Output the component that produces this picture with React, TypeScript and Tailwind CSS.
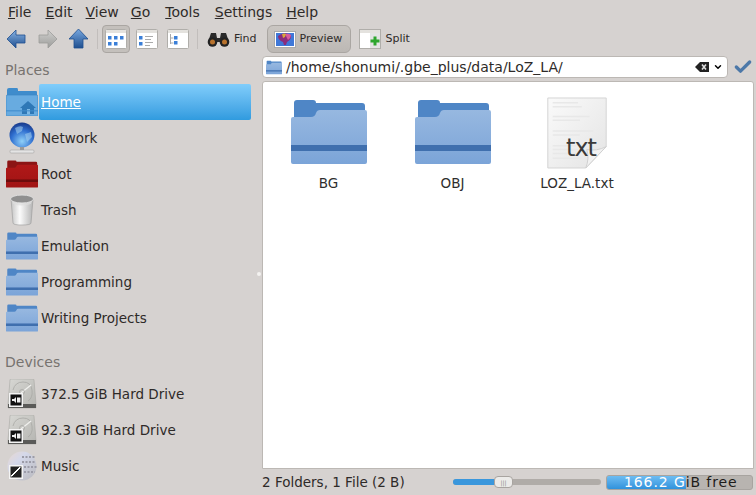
import React from "react";
import { Check, ChevronDown } from "lucide-react";

const FolderIcon = ({ id, className, back = "#4f86c6", top = "#97b8e0", bottom = "#7ba4d8", band = "#3f6fae" }: { id: string; className: string; back?: string; top?: string; bottom?: string; band?: string }) => (
  <svg viewBox="0 0 76 64" className={className}>
    <defs>
      <linearGradient id={id} x1="0" y1="0" x2="0" y2="1">
        <stop offset="0" stopColor={top} />
        <stop offset="1" stopColor={bottom} />
      </linearGradient>
    </defs>
    <path d="M3 3q0-3 3-3h16q3 0 3 3h46q3 0 3 3v14H3z" fill={back} />
    <path d="M0 19q0-2 2-2h18q4 0 5-4 1-3 4-3h45q2 0 2 2v50q0 2-2 2H2q-2 0-2-2z" fill={`url(#${id})`} />
    <rect x="0" y="45" width="76" height="6" fill={band} />
  </svg>
);

const HomeFolderIcon = () => (
  <svg viewBox="0 0 32 28" className="h-7 w-8">
    <path d="M1 2q0-2 2-2h8q1 0 1 2v1h18q1 0 1 1v5H1z" fill="#3f8ccc" />
    <rect x="0" y="7" width="32" height="21" rx="1.5" fill="#68abe0" stroke="#3c86c4" strokeWidth="0.7" />
    <path d="M14 20l8-7 8 7h-2v6H16v-6z" fill="#2f78b6" />
    <rect x="21" y="21" width="3" height="5" fill="#7db9e6" />
    <rect x="0" y="22" width="32" height="1.5" fill="#3f8ccc" opacity="0.7" />
  </svg>
);

const GlobeIcon = () => (
  <svg viewBox="0 0 26 33" className="h-[33px] w-[26px]">
    <defs>
      <radialGradient id="globe" cx="0.5" cy="0.75" r="0.8">
        <stop offset="0" stopColor="#8fd0f8" />
        <stop offset="0.55" stopColor="#2f6fd0" />
        <stop offset="1" stopColor="#14307e" />
      </radialGradient>
    </defs>
    <circle cx="13" cy="13" r="12.5" fill="url(#globe)" />
    <path d="M6 6q5-3 8-1l-1 4-5 3zM16 12l6-2 1 5-5 5z" fill="#a9d4ee" opacity="0.55" />
    <rect x="11" y="25" width="4" height="4" fill="#9a9a9a" />
    <rect x="1" y="28" width="24" height="3" rx="1" fill="#e4e4e4" stroke="#999" strokeWidth="0.5" />
  </svg>
);

const TrashIcon = () => (
  <svg viewBox="0 0 26 32" className="h-8 w-[26px]">
    <defs>
      <linearGradient id="bin" x1="0" y1="0" x2="1" y2="0">
        <stop offset="0" stopColor="#c4c4c4" />
        <stop offset="0.4" stopColor="#fbfbfb" />
        <stop offset="1" stopColor="#b4b4b4" />
      </linearGradient>
    </defs>
    <path d="M2 5l2 24q0 2 9 2t9-2l2-24z" fill="url(#bin)" stroke="#999" strokeWidth="0.6" />
    <ellipse cx="13" cy="5" rx="11.5" ry="4" fill="#8f8f8f" stroke="#ddd" strokeWidth="1" />
    <path d="M3 7q10 5 20 0l-1 3q-9 3-18 0z" fill="#ddd" opacity="0.7" />
  </svg>
);

const DriveIcon = ({ id }: { id: string }) => (
  <svg viewBox="0 0 30 30" className="h-[30px] w-[30px]">
    <defs>
      <linearGradient id={id} x1="0" y1="0" x2="1" y2="1">
        <stop offset="0" stopColor="#d8d8d4" />
        <stop offset="1" stopColor="#b4b4b0" />
      </linearGradient>
    </defs>
    <path d="M3 1q0-1 1-1h22q1 0 1 1l2 24v4H1v-4z" fill={`url(#${id})`} stroke="#a0a09c" strokeWidth="0.5" />
    <path d="M1 25h28v4H1z" fill="#5a5a58" />
    <path d="M6 11q2-8 10-8t9 8-4 11" fill="none" stroke="#a8a8a4" strokeWidth="0.8" />
    <path d="M24 6L14 14" stroke="#f0f0ee" strokeWidth="1.200" />
    <circle cx="15" cy="13" r="2.500" fill="none" stroke="#a4a4a0" strokeWidth="0.7" />
    <rect x="2" y="14" width="14" height="14" fill="#f4f4f4" />
    <rect x="3.500" y="15.500" width="11" height="11" fill="#111" />
    <path d="M5 20h2l2-2v6l-2-2H5z" fill="#eee" />
    <rect x="10" y="18.500" width="3.500" height="5" fill="#eee" />
  </svg>
);

const DiscIcon = () => (
  <svg viewBox="0 0 30 30" className="h-[30px] w-[30px]">
    <defs>
      <linearGradient id="disc" x1="0" y1="0" x2="1" y2="1">
        <stop offset="0" stopColor="#e8d8d0" />
        <stop offset="0.35" stopColor="#d4d8ea" />
        <stop offset="1" stopColor="#b8b8bc" />
      </linearGradient>
    </defs>
    <circle cx="15" cy="15" r="14.500" fill="url(#disc)" />
    <path d="M15 6h13M15 11h14M17 16h13M17 21h11" stroke="#9c9ca8" strokeWidth="2" strokeDasharray="2 1.500" />
    <rect x="2" y="14" width="14" height="14" fill="#f4f4f4" />
    <rect x="3.500" y="15.500" width="11" height="11" fill="#222" />
    <path d="M5 25l8-8v-1l-9 9z" fill="#fff" stroke="#fff" />
  </svg>
);

const ViewIcon = ({ mode }: { mode: "icons" | "details" | "columns" }) => (
  <svg viewBox="0 0 22 20" className="h-5 w-[22px]">
    <rect x="0.500" y="0.500" width="21" height="19" rx="1" fill="#fff" stroke="#b0aeaa" />
    <rect x="1" y="1" width="20" height="3" fill="#e4e2de" />
    {mode === "icons" && (
      <g fill="#3a7fd8">
        <rect x="3" y="7" width="3.500" height="3.500" />
        <rect x="9" y="7" width="3.500" height="3.500" />
        <rect x="15" y="7" width="3.500" height="3.500" />
        <rect x="3" y="13" width="3.500" height="3.500" />
        <rect x="9" y="13" width="3.500" height="3.500" />
      </g>
    )}
    {mode === "details" && (
      <g>
        <rect x="3" y="7" width="3.500" height="3.500" fill="#3a7fd8" />
        <rect x="3" y="13" width="3.500" height="3.500" fill="#3a7fd8" />
        <path d="M9 7.500h8M9 10.500h6M9 13.500h8M9 16.500h5" stroke="#aaa" />
      </g>
    )}
    {mode === "columns" && (
      <g>
        <path d="M3.500 5v10M3.500 9h3M3.500 14h3" stroke="#aaa" fill="none" />
        <rect x="7" y="7" width="3.500" height="3.500" fill="#3a7fd8" />
        <rect x="7" y="12" width="3.500" height="3.500" fill="#3a7fd8" />
      </g>
    )}
  </svg>
);

const Arrow = ({ dir, id, light, dark }: { dir: "left" | "right" | "up"; id: string; light: string; dark: string }) => {
  const d = {
    left: "M0 10L9 1v5h9v8H9v5z",
    right: "M19 10L10 1v5H1v8h9v5z",
    up: "M9.500 0L19 10h-5v9H5v-9H0z",
  }[dir];
  return (
    <svg viewBox="0 0 19 20" className="h-5 w-[19px]">
      <defs>
        <linearGradient id={id} x1="0" y1="0" x2="0" y2="1">
          <stop offset="0" stopColor={light} />
          <stop offset="1" stopColor={dark} />
        </linearGradient>
      </defs>
      <path d={d} fill={`url(#${id})`} stroke={dark} strokeWidth="0.8" />
    </svg>
  );
};

const Binoculars = () => (
  <svg viewBox="0 0 23 15" className="h-[15px] w-[23px]">
    <path d="M4 1h5l1 5h3l1-5h5l3 9H1z" fill="#2a2a2a" />
    <circle cx="5.500" cy="10" r="4.800" fill="#222" />
    <circle cx="17.500" cy="10" r="4.800" fill="#222" />
    <circle cx="5.500" cy="10" r="2.500" fill="#b8722c" />
    <circle cx="17.500" cy="10" r="2.500" fill="#b8722c" />
  </svg>
);

const PreviewIcon = () => (
  <svg viewBox="0 0 22 17" className="h-[17px] w-[22px]">
    <rect x="0.500" y="0.500" width="21" height="16" fill="#fff" stroke="#aaa" />
    <rect x="2" y="2" width="18" height="13" fill="#3f78d8" />
    <path d="M4 5q6-5 13-1 1 4-4 7l-1 3h-2l-1-3Q4 9 4 5z" fill="#8a2c7c" />
    <path d="M11 3q4-1 6 1 0 3-3 5z" fill="#d85c9c" />
    <path d="M8 3q3-1 4 0l-1 3-2 1z" fill="#d8a83c" />
  </svg>
);

const SplitIcon = () => (
  <svg viewBox="0 0 22 20" className="h-5 w-[22px]">
    <rect x="0.500" y="0.500" width="21" height="19" fill="#fff" stroke="#b0aeaa" />
    <rect x="1" y="1" width="20" height="3" fill="#e4e2de" />
    <rect x="11" y="4" width="10" height="15" fill="#e4e4e4" />
    <path d="M14.500 7.500h3v3h3v3h-3v3h-3v-3h-3v-3h3z" fill="#2ea62e" />
  </svg>
);

const TxtIcon = () => (
  <div className="relative h-[72px] w-[62px]">
    <svg viewBox="0 0 62 74" className="h-[72px] w-[62px]">
      <defs>
        <linearGradient id="page" x1="0" y1="0" x2="1" y2="1">
          <stop offset="0" stopColor="#fafafa" />
          <stop offset="1" stopColor="#e4e4e4" />
        </linearGradient>
      </defs>
      <path d="M1 1h60v50L40 73H1z" fill="url(#page)" stroke="#d4d4d4" />
      <path d="M6 6h26M6 10h30M6 20h38M6 24h28M6 35h42M6 39h28M6 50h24M6 54h26M6 58h24M6 63h30" stroke="#e8e8e8" strokeWidth="1.500" />
      <path d="M61 51L40 73q4-10 1-19 10 2 20-3z" fill="#f2f2f2" stroke="#d0d0d0" />
    </svg>
    <span className="absolute left-[20px] top-[39px] text-[24px] leading-none text-[#3a3a3a] tracking-[-1px]">txt</span>
  </div>
);

const PlaceRow = ({ icon, label, active }: { icon: React.ReactNode; label: string; active?: boolean }) => (
  <div className="flex h-9 items-center">
    <div className="flex w-[39px] shrink-0 justify-center pl-[4px]">{icon}</div>
    {active ? (
      <div className="flex h-[36px] w-[212px] items-center rounded-[2px] bg-gradient-to-b from-[#80cdfb] to-[#2f9bdf] pl-[2px] text-white underline">
        {label}
      </div>
    ) : (
      <span className="pl-[2px]">{label}</span>
    )}
  </div>
);

const FileItem = ({ icon, name, width }: { icon: React.ReactNode; name: string; width: string }) => (
  <div className={`flex flex-col items-center ${width}`}>
    <div className="h-[72px]">{icon}</div>
    <span className="mt-[4px] text-[13.500px] leading-[20px] text-[#2e2e2e]">{name}</span>
  </div>
);

const MenuItem = ({ first, rest, className }: { first: string; rest: string; className?: string }) => (
  <span className={className}>
    <span className="underline">{first}</span>
    {rest}
  </span>
);

export default function App() {
  return (
    <div
      className="flex h-[495px] w-[756px] flex-col overflow-hidden bg-[#d6d2d0] text-[14px] text-[#2e2a28]"
      style={{ fontFamily: '"DejaVu Sans", sans-serif' }}
    >
      <div className="flex h-[24px] items-center gap-[14px] pl-[8px] text-[14px]">
        <MenuItem first="F" rest="ile" />
        <MenuItem first="E" rest="dit" />
        <MenuItem first="V" rest="iew" className="ml-[-1px]" />
        <MenuItem first="G" rest="o" className="ml-[-2px]" />
        <MenuItem first="T" rest="ools" className="ml-[1px]" />
        <MenuItem first="S" rest="ettings" className="ml-[1px]" />
        <MenuItem first="H" rest="elp" />
      </div>

      <div className="flex h-[30px] items-center pl-[7px] text-[11px]">
        <Arrow dir="left" id="a1" light="#8ab4e4" dark="#1f4f8f" />
        <div className="ml-[12px]"><Arrow dir="right" id="a2" light="#d0d0ce" dark="#9c9c9a" /></div>
        <div className="ml-[12px]"><Arrow dir="up" id="a3" light="#78a8e0" dark="#1f4f8f" /></div>
        <div className="ml-[9px] h-[20px] w-px bg-[#c2bebc]" />
        <div className="ml-[4px] flex h-[28px] w-[28px] items-center justify-center rounded-[4px] border border-[#aaa6a2] bg-[#c4c0bc]">
          <ViewIcon mode="icons" />
        </div>
        <div className="ml-[6px]"><ViewIcon mode="details" /></div>
        <div className="ml-[9px]"><ViewIcon mode="columns" /></div>
        <div className="ml-[8px] h-[20px] w-px bg-[#c2bebc]" />
        <div className="ml-[9px]"><Binoculars /></div>
        <span className="ml-[4px]">Find</span>
        <div className="ml-[10px] flex h-[28px] w-[84px] items-center rounded-[6px] border border-[#aaa6a2] bg-gradient-to-b from-[#cac6c2] to-[#bcb8b4] pl-[6px]">
          <PreviewIcon />
          <span className="ml-[4px]">Preview</span>
        </div>
        <div className="ml-[8px]"><SplitIcon /></div>
        <span className="ml-[5px]">Split</span>
      </div>

      <div className="flex min-h-0 flex-1">
        <aside className="relative w-[262px] shrink-0 text-[13.500px]">
          <div className="flex h-[30px] items-center pl-[5px] pt-[2px] text-[14px] text-[#77736f]">Places</div>
          <PlaceRow icon={<HomeFolderIcon />} label="Home" active />
          <PlaceRow icon={<GlobeIcon />} label="Network" />
          <PlaceRow icon={<FolderIcon id="f1" className="h-[28px] w-[32px]" back="#8c1414" top="#b01818" bottom="#a01414" band="#6c0c0c" />} label="Root" />
          <PlaceRow icon={<TrashIcon />} label="Trash" />
          <PlaceRow icon={<FolderIcon id="f2" className="h-[28px] w-[32px]" />} label="Emulation" />
          <PlaceRow icon={<FolderIcon id="f3" className="h-[28px] w-[32px]" />} label="Programming" />
          <PlaceRow icon={<FolderIcon id="f4" className="h-[28px] w-[32px]" />} label="Writing Projects" />
          <div className="flex h-[37px] items-center pl-[5px] pt-[15px] text-[14px] text-[#77736f]">Devices</div>
          <div className="h-[3px]" />
          <PlaceRow icon={<DriveIcon id="d1" />} label="372.5 GiB Hard Drive" />
          <PlaceRow icon={<DriveIcon id="d2" />} label="92.3 GiB Hard Drive" />
          <PlaceRow icon={<DiscIcon />} label="Music" />
          <div className="absolute left-[257px] top-[218px] h-[4px] w-[4px] rounded-full bg-[#f4f2f0]" />
        </aside>

        <main className="flex min-w-0 flex-1 flex-col">
          <div className="flex h-[26px] items-start pt-[2px]">
            <div className="flex h-[22px] w-[466px] items-center rounded-[4px] border border-[#bcb8b4] bg-white pl-[3px] pr-[4px] text-[#2e2a28]">
              <FolderIcon id="f5" className="h-[15px] w-[16px]" />
              <span className="ml-[4px] flex-1 whitespace-nowrap">/home/shonumi/.gbe_plus/data/LoZ_LA/</span>
              <svg viewBox="0 0 14 10" className="h-[10px] w-[14px]">
                <path d="M0 5l5-5h9v10H5z" fill="#222" />
                <path d="M7 2.500l4 5M11 2.500l-4 5" stroke="#ddd" strokeWidth="1.600" />
              </svg>
              <ChevronDown className="ml-[4px] h-[10px] w-[10px] text-black" strokeWidth={3.5} />
            </div>
            <Check className="ml-[5px] mt-[1px] h-[20px] w-[20px] text-[#4c78a8]" strokeWidth={4} />
          </div>
          <div className="ml-0 mr-[2px] mt-[1px] flex h-[388px] gap-[1px] rounded-t-[3px] border border-[#bcb8b4] bg-white pl-[1px] pt-[15px]">
            <FileItem icon={<FolderIcon id="f6" className="mt-[3px] h-[64px] w-[76px]" />} name="BG" width="w-[129px]" />
            <FileItem icon={<FolderIcon id="f7" className="mt-[3px] h-[64px] w-[76px]" />} name="OBJ" width="w-[117px]" />
            <FileItem icon={<TxtIcon />} name="LOZ_LA.txt" width="w-[130px]" />
          </div>
          <div className="flex flex-1 items-center text-[13.500px]">
            <span className="w-[191px] whitespace-nowrap">2 Folders, 1 File (2 B)</span>
            <div className="relative h-[6px] w-[148px] rounded-full bg-[#b0aca8]">
              <div className="h-[6px] w-[44px] rounded-l-full bg-[#3a97dc]" />
              <div className="absolute left-[41px] top-[-3px] flex h-[12px] w-[19px] items-center justify-center rounded-[4px] border border-[#a8a4a0] bg-[#ecebe9] text-[6px] text-[#888]">|||</div>
            </div>
            <div className="relative ml-[5px] flex h-[15px] w-[147px] items-center overflow-hidden rounded-[3px] border border-[#a8a4a0] bg-[#b8b4b0] pl-[17px] text-[14px] leading-none tracking-[0.9px] text-[#1e1c1a]">
              <div className="absolute inset-y-0 left-0 w-[79px] bg-gradient-to-b from-[#6cbcf2] to-[#2f92dc]" />
              <span className="relative whitespace-nowrap">
                <span className="text-white">166.2 G</span>iB free
              </span>
            </div>
          </div>
        </main>
      </div>
    </div>
  );
}
